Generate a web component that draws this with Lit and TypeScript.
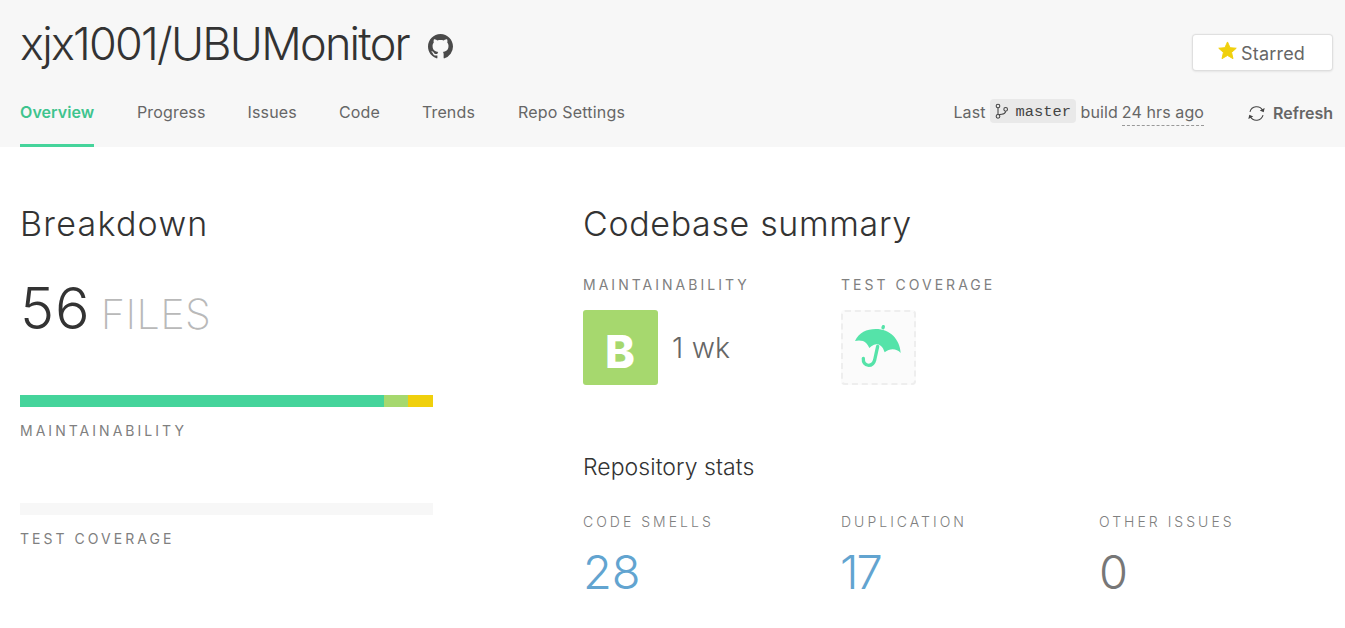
import { LitElement, html, css } from "lit";
import { customElement } from "lit/decorators.js";
import { classMap } from "lit/directives/class-map.js";

const tabs = [
  { name: "Overview", active: true },
  { name: "Progress" },
  { name: "Issues" },
  { name: "Code" },
  { name: "Trends" },
  { name: "Repo Settings" },
];

const segments = [
  { grade: "a", share: 364 },
  { grade: "b", share: 24 },
  { grade: "c", share: 25 },
];

const stats = [
  { label: "CODE SMELLS", value: "28", link: true },
  { label: "DUPLICATION", value: "17", link: true },
  { label: "OTHER ISSUES", value: "0", link: false },
];

@customElement("repo-header")
export class RepoHeader extends LitElement {
  static styles = css`
    :host { display: block; height: 147px; background: #f7f7f7; }
    .top { display: flex; height: 86px; padding: 0 12px 0 20px; align-items: flex-start; }
    .title { margin: 0; font-weight: 300; font-size: 45px; line-height: 87px; letter-spacing: -1.75px; color: #333; white-space: nowrap; }
    .octo { width: 25px; height: 25px; margin: 34px 0 0 19px; fill: #4a4a4a; }
    .starred { margin: 35px 1px 0 auto; box-sizing: border-box; width: 139px; height: 35px; display: flex; align-items: center; padding: 2px 0 0 25px; gap: 4px; background: #fff; border-radius: 3px; box-shadow: 0 0 1px 1px #dedede, 0 1px 3px rgba(0,0,0,.14); font-size: 18px; letter-spacing: .2px; color: #666; }
    .star { width: 19px; height: 19px; margin-top: -7px; fill: #f0d00c; }
    .bar { display: flex; justify-content: space-between; padding: 12px 12px 0 20px; height: 49px; line-height: 28px; font-size: 16px; color: #666; }
    .tabs { display: flex; gap: 42px; }
    .tab { height: 46px; border-bottom: 3px solid transparent; letter-spacing: .15px; white-space: nowrap; }
    .tab:last-child { margin-left: 1px; letter-spacing: .2px; }
    .active { width: 74px; margin-right: 1px; color: #3ec48e; font-weight: 600; letter-spacing: .08px; border-color: #45d49b; }
    .build { display: flex; align-items: flex-start; white-space: nowrap; letter-spacing: .1px; }
    .branch { display: flex; align-items: center; margin: 1px 5px 0 4px; height: 24px; width: 86px; box-sizing: border-box; padding-left: 5px; gap: 7px; border-radius: 4px; background: #e9e9e9; color: #444; font: 15.4px "Liberation Mono", monospace; letter-spacing: 0; }
    .branch-name { padding-top: 2px; }
    .fork { width: 14px; height: 16px; }
    .when { height: 27px; border-bottom: 1px dashed #999; margin-left: 4px; }
    .refresh { display: flex; align-items: center; gap: 8px; height: 30px; margin-left: 44px; font-weight: 600; letter-spacing: 0; }
    .cycle { width: 17px; height: 17px; }
    .stroke { fill: none; stroke: #444; stroke-width: 3.2; }
    .solid { fill: #444; }
  `;
  render() {
    return html`
      <div class="top">
        <h1 class="title">xjx1001/UBUMonitor</h1>
        <svg class="octo" viewBox="0 0 16 16"><path d="M8 0C3.58 0 0 3.58 0 8c0 3.54 2.29 6.53 5.47 7.59.4.07.55-.17.55-.38 0-.19-.01-.82-.01-1.49-2.01.37-2.53-.49-2.69-.94-.09-.23-.48-.94-.82-1.13-.28-.15-.68-.52-.01-.53.63-.01 1.08.58 1.23.82.72 1.21 1.87.87 2.33.66.07-.52.28-.87.51-1.07-1.78-.2-3.64-.89-3.64-3.95 0-.87.31-1.59.82-2.15-.08-.2-.36-1.02.08-2.12 0 0 .67-.21 2.2.82.64-.18 1.32-.27 2-.27s1.36.09 2 .27c1.53-1.04 2.2-.82 2.2-.82.44 1.1.16 1.92.08 2.12.51.56.82 1.27.82 2.15 0 3.07-1.87 3.75-3.65 3.95.29.25.54.73.54 1.48 0 1.07-.01 1.93-.01 2.2 0 .21.15.46.55.38A8.01 8.01 0 0 0 16 8c0-4.42-3.58-8-8-8z"/></svg>
        <div class="starred">
          <svg class="star" viewBox="0 0 20 20"><path d="M10 1 L12.7 7 L19.2 7.6 L14.3 12 L15.8 18.6 L10 15.2 L4.2 18.6 L5.7 12 L.8 7.6 L7.3 7Z" stroke="#f0d00c" stroke-width="1" stroke-linejoin="round"/></svg>
          <span>Starred</span>
        </div>
      </div>
      <div class="bar">
        <nav class="tabs">${tabs.map((t) => html`<a class=${classMap({ tab: true, active: !!t.active })}>${t.name}</a>`)}</nav>
        <div class="build">
          <span>Last</span>
          <span class="branch">
            <svg class="fork" viewBox="28 31 42 48"><g class="stroke"><circle cx="37" cy="40" r="5.5"/><circle cx="37" cy="71" r="5.5"/><circle cx="60" cy="50" r="5.5"/><path d="M37 45V66M60 56C58 68 45 62 40 67"/></g></svg>
            <span class="branch-name">master</span>
          </span>
          <span>build</span>
          <span class="when">24 hrs ago</span>
          <span class="refresh">
            <svg class="cycle" viewBox="38 28 52 52"><g class="stroke"><path d="M44 49A21 21 0 0 1 83 45M84 59A21 21 0 0 1 45 63"/></g><path class="solid" d="M89 37L86 50L74 45ZM39 71L42 58L54 63Z"/></svg>
            <span>Refresh</span>
          </span>
        </div>
      </div>`;
  }
}

@customElement("repo-breakdown")
export class RepoBreakdown extends LitElement {
  static styles = css`
    :host { display: block; }
    h2 { margin: 0; padding-top: 57px; font-weight: 300; font-size: 34px; line-height: 40px; letter-spacing: 1.25px; color: #333; }
    .count { margin-top: 34px; height: 60px; line-height: 60px; font-size: 57.5px; font-weight: 300; color: #333; letter-spacing: 1px; white-space: nowrap; }
    .files { font-size: 41.5px; font-weight: 200; color: #b9b9b9; letter-spacing: .4px; margin-left: 10px; }
    .meter { display: flex; height: 12px; margin-top: 57px; background: #f7f7f7; }
    .second { margin-top: 62px; }
    .a { background: #45d49b; }
    .b { background: #a6d86e; }
    .c { background: #f0d00c; }
    .label { margin-top: 14px; height: 20px; line-height: 20px; font-size: 14px; letter-spacing: 3.03px; color: #808080; }
  `;
  render() {
    const total = segments.reduce((n, s) => n + s.share, 0);
    return html`
      <h2>Breakdown</h2>
      <div class="count">56<span class="files">FILES</span></div>
      <div class="meter">${segments.map((s) => html`<div class=${s.grade} style=${`width:${(s.share / total) * 100}%`}></div>`)}</div>
      <div class="label">MAINTAINABILITY</div>
      <div class="meter second"></div>
      <div class="label">TEST COVERAGE</div>`;
  }
}

@customElement("repo-summary")
export class RepoSummary extends LitElement {
  static styles = css`
    :host { display: block; }
    h2 { margin: 0; padding-top: 57px; font-weight: 300; font-size: 34px; line-height: 40px; letter-spacing: .64px; color: #333; white-space: nowrap; }
    .cols { display: grid; grid-template-columns: 258px 258px 240px; }
    .ratings { margin-top: 31px; }
    .label { height: 20px; line-height: 20px; font-size: 14px; letter-spacing: 3.02px; color: #808080; white-space: nowrap; }
    .thin { font-weight: 300; }
    .rating { display: flex; margin-top: 15px; height: 75px; }
    .grade { box-sizing: border-box; padding-right: 1px; width: 75px; height: 75px; border-radius: 3px; background: #a6d86e; color: #fff; font-size: 45px; font-weight: 800; line-height: 83px; text-align: center; }
    .time { margin-left: 14px; font-size: 28.5px; font-weight: 300; line-height: 76px; letter-spacing: .2px; color: #666; }
    .cover { box-sizing: border-box; width: 75px; height: 75px; border: 2px dashed #eee; border-radius: 4px; background: #fbfbfb; }
    .umbrella { display: block; width: 71px; height: 71px; fill: #55e3a9; }
    .line { fill: none; stroke: #55e3a9; stroke-width: 10; stroke-linecap: round; stroke-linejoin: round; }
    h3 { margin: 67px 0 0; font-weight: 300; font-size: 23px; line-height: 30px; letter-spacing: .05px; color: #333; }
    .stats { margin-top: 30px; }
    .value { margin-top: 10px; height: 60px; line-height: 60px; font-size: 47px; font-weight: 300; color: #777; }
    .link { color: #62a4d0; }
    .tight { letter-spacing: -2px; margin-left: -1px; }
  `;
  render() {
    return html`
      <h2>Codebase summary</h2>
      <div class="cols ratings">
        <div>
          <div class="label">MAINTAINABILITY</div>
          <div class="rating"><div class="grade">B</div><div class="time">1 wk</div></div>
        </div>
        <div>
          <div class="label">TEST COVERAGE</div>
          <div class="rating"><div class="cover">
            <svg class="umbrella" viewBox="24 36 213 213">
              <path d="M60 123C72 98 95 87 122 87C165 87 195 118 197 159C185 145 165 144 149 157C146 149 143 141 137 137Q128 131 117 134Q108 138 103 144C98 133 92 126 84 123Q72 120 60 123Z"/>
              <path class="line" d="M128 139L119 180C116 192 108 196 101 196C90 196 84 187 85 175M144 83L145 80"/>
            </svg>
          </div></div>
        </div>
      </div>
      <h3>Repository stats</h3>
      <div class="cols stats">${stats.map((s) => html`
        <div>
          <div class="label thin">${s.label}</div>
          <div class=${classMap({ value: true, link: s.link, tight: s.value.startsWith("1") })}>${s.value}</div>
        </div>`)}</div>`;
  }
}

@customElement("app-root")
export class AppRoot extends LitElement {
  static styles = css`
    :host { display: block; height: 628px; overflow: hidden; background: #fff; font-family: Inter, "Liberation Sans", sans-serif; }
    .main { display: grid; grid-template-columns: 413px 1fr; column-gap: 150px; padding: 0 6px 0 20px; }
  `;
  render() {
    return html`
      <repo-header></repo-header>
      <main class="main">
        <repo-breakdown></repo-breakdown>
        <repo-summary></repo-summary>
      </main>`;
  }
}
